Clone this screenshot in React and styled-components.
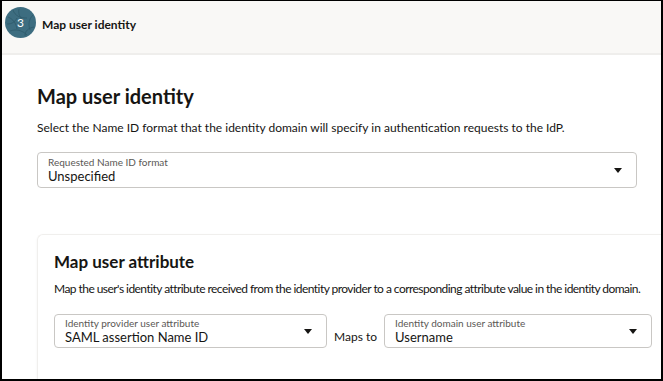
import React from "react";
import styled, { createGlobalStyle } from "styled-components";

const GlobalStyle = createGlobalStyle`
  html, body {
    margin: 0;
    padding: 0;
    background: #ffffff;
  }
  body {
    font-family: Lato, "Noto Sans", sans-serif;
    color: #161513;
  }
`;

const Frame = styled.div`
  box-sizing: border-box;
  width: 663px;
  height: 381px;
  border: 2px solid #000;
  border-top-width: 1px;
  overflow: hidden;
  background: #fff;
`;

const Header = styled.header`
  display: flex;
  align-items: center;
  gap: 6px;
  height: 52px;
  padding-left: 3px;
  background: #f9f8f6;
  border-bottom: 2px solid #efeeec;
`;

const StepBadge = styled.div`
  position: relative;
  width: 31px;
  height: 31px;
  border-radius: 50%;
  overflow: hidden;
  background: #3d6d80;
  display: flex;
  align-items: center;
  justify-content: center;
  margin-top: -9px;

  svg {
    position: absolute;
    inset: 0;
  }

  span {
    position: relative;
    color: #fff;
    font-size: 12px;
  }
`;

const HeaderTitle = styled.h2`
  margin: -5px 0 0;
  font-size: 12px;
  font-weight: 700;
`;

const Main = styled.main`
  padding: 29px 0 0 35px;
`;

const Title = styled.h1`
  margin: 0;
  font-size: 20px;
  line-height: 24px;
  font-weight: 700;
`;

const Description = styled.p`
  margin: ${(p) => p.$top || 12}px 0 0;
  font-size: 12px;
  line-height: 16px;
  white-space: nowrap;
  letter-spacing: ${(p) => p.$tight || 0}px;
`;

const SelectBox = styled.div`
  box-sizing: border-box;
  width: ${(p) => p.$width}px;
  height: ${(p) => p.$height}px;
  border: 1px solid #c9c7c4;
  border-radius: 4px;
  display: flex;
  align-items: center;
  padding: 0 14px 0 10px;
  background: #fff;
`;

const SelectText = styled.div`
  flex: 1;
  display: flex;
  flex-direction: column;
`;

const SelectLabel = styled.span`
  font-size: 10px;
  line-height: 12px;
  color: #5a5855;
`;

const SelectValue = styled.span`
  font-size: 13px;
  line-height: 16px;
`;

const Caret = () => (
  <svg width="8" height="5" viewBox="0 0 8 5">
    <path d="M0 0h8L4 5z" fill="#161513" />
  </svg>
);

const Select = ({ label, value, width, height }) => (
  <SelectBox $width={width} $height={height}>
    <SelectText>
      <SelectLabel>{label}</SelectLabel>
      <SelectValue>{value}</SelectValue>
    </SelectText>
    <Caret />
  </SelectBox>
);

const FieldWrap = styled.div`
  margin-top: 16px;
`;

const Card = styled.section`
  box-sizing: border-box;
  width: 660px;
  margin-top: 46px;
  padding: 16px 16px 60px;
  border: 1px solid #f0efed;
  border-right: none;
  border-radius: 6px 0 0 6px;
  box-shadow: 0 1px 3px rgba(0, 0, 0, 0.05);
`;

const CardTitle = styled.h3`
  margin: 0;
  font-size: 17px;
  line-height: 22px;
  font-weight: 700;
`;

const MapRow = styled.div`
  display: flex;
  align-items: flex-end;
  gap: 7px;
  margin-top: 17px;
`;

const MapsTo = styled.span`
  font-size: 12px;
  line-height: 16px;
  padding-bottom: 3px;
`;

const App = () => (
  <>
    <GlobalStyle />
    <Frame>
      <Header>
        <StepBadge>
          <svg width="31" height="31" viewBox="0 0 31 31" fill="none" stroke="#2f5a6b" strokeWidth="0.8">
            <path d="M3 10c5 2 8 6 9 12M8 3c2 6 7 8 14 8M28 8c-4 4-5 9-3 15M5 24c6-2 12-1 17 4M14 2c-1 5 1 9 5 12M2 17c5 0 8-2 10-6M20 29c0-5 3-8 9-9" />
          </svg>
          <span>3</span>
        </StepBadge>
        <HeaderTitle>Map user identity</HeaderTitle>
      </Header>
      <Main>
        <Title>Map user identity</Title>
        <Description>
          Select the Name ID format that the identity domain will specify in authentication requests to the IdP.
        </Description>
        <FieldWrap>
          <Select label="Requested Name ID format" value="Unspecified" width={600} height={36} />
        </FieldWrap>
        <Card>
          <CardTitle>Map user attribute</CardTitle>
          <Description $top={8} $tight={-0.55}>
            Map the user's identity attribute received from the identity provider to a corresponding attribute value in the identity domain.
          </Description>
          <MapRow>
            <Select label="Identity provider user attribute" value="SAML assertion Name ID" width={273} height={34} />
            <MapsTo>Maps to</MapsTo>
            <Select label="Identity domain user attribute" value="Username" width={268} height={34} />
          </MapRow>
        </Card>
      </Main>
    </Frame>
  </>
);

export default App;
